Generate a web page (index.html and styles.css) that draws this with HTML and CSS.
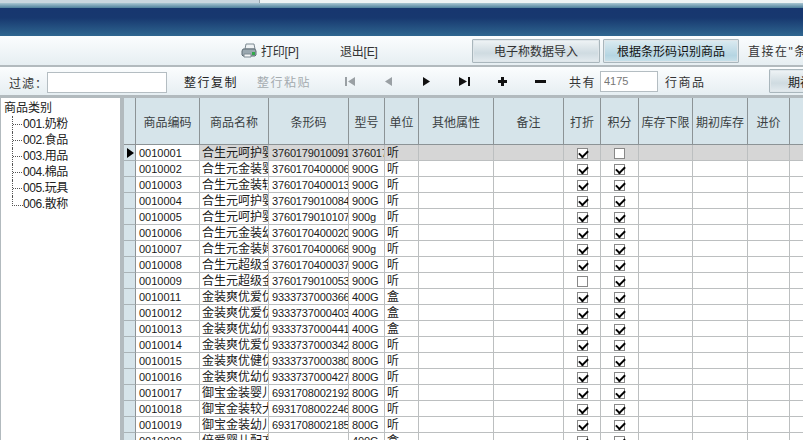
FILE: index.html
```html
<!DOCTYPE html>
<html lang="zh">
<head>
<meta charset="utf-8">
<title>商品</title>
<link rel="stylesheet" href="styles.css">
</head>
<body>
<div class="app">
  <div class="topstrip"><div class="tabs"><div class="tab-a"></div><div class="tab-b"></div></div><div class="fade"></div></div>
  <div class="banner"></div>
  <div class="toolbar">
    <svg class="printer" width="16" height="15" viewBox="0 0 16 15"><path d="M5 1h8l1 5H4z" fill="#eef2f4" stroke="#7d8a92"/><path d="M2 6h12l1 2v4l-1 1H2l-1-1V8z" fill="#9aa8b0" stroke="#5f6d75"/><path d="M3 11h7v3H3z" fill="#f4f6f7" stroke="#7d8a92"/><rect x="11" y="9" width="3" height="3" fill="#2fa84a"/></svg>
    <span class="print-label">打印[P]</span>
    <span class="exit-label">退出[E]</span>
    <button class="btn btn-import">电子称数据导入</button>
    <button class="btn btn-active">根据条形码识别商品</button>
    <span class="hint">直接在"条形码"列输入</span>
  </div>
  <div class="sep"></div>
  <div class="filterbar">
    <span class="filter-label">过滤：</span>
    <input class="filter-input" type="text">
    <span class="act act-copy">整行复制</span>
    <span class="act act-paste">整行粘贴</span>
    <div class="nav">
      <svg class="nav-i" width="11" height="9" viewBox="0 0 11 9"><path d="M0 0h2v9H0zM10 0v9L3 4.500z" fill="#9aa0a4"/></svg>
      <svg class="nav-i" width="11" height="9" viewBox="0 0 11 9"><path d="M9 0v9L2 4.500z" fill="#9aa0a4"/></svg>
      <svg class="nav-i" width="11" height="9" viewBox="0 0 11 9"><path d="M2 0v9l7-4.500z" fill="#111"/></svg>
      <svg class="nav-i" width="11" height="9" viewBox="0 0 11 9"><path d="M0 0v9l8-4.500zM9 0h2v9H9z" fill="#111"/></svg>
      <svg class="nav-i" width="11" height="11" viewBox="0 0 11 11"><path d="M4 1h3v3h3v3H7v3H4V7H1V4h3z" fill="#111"/></svg>
      <svg class="nav-i" width="11" height="11" viewBox="0 0 11 11"><path d="M0 4h11v3H0z" fill="#111"/></svg>
    </div>
    <span class="total">共有</span>
    <input class="count-input" type="text" value="4175">
    <span class="total-after">行商品</span>
    <button class="btn btn-period">期初库存导入</button>
  </div>
  <div class="sep2"></div>
  <div class="main">
    <div class="tree">
      <div class="tree-root">商品类别</div>
      <ul class="tree-list">
        <li>001.奶粉</li>
        <li>002.食品</li>
        <li>003.用品</li>
        <li>004.棉品</li>
        <li>005.玩具</li>
        <li>006.散称</li>
      </ul>
    </div>
    <div class="gridpane">
      <table class="grid">
        <colgroup>
          <col class="c0"><col class="c1"><col class="c2"><col class="c3"><col class="c4"><col class="c5"><col class="c6"><col class="c7"><col class="c8"><col class="c9"><col class="c10"><col class="c11"><col class="c12"><col class="c13">
        </colgroup>
        <thead>
          <tr><th></th><th>商品编码</th><th>商品名称</th><th>条形码</th><th>型号</th><th>单位</th><th>其他属性</th><th>备注</th><th>打折</th><th>积分</th><th>库存下限</th><th>期初库存</th><th>进价</th><th>零售价</th></tr>
        </thead>
        <tbody>
          <tr class="sel"><td class="rh"><span class="arrow"></span></td><td class="code">0010001</td><td>合生元呵护婴儿</td><td class="num">3760179010091</td><td class="num">376017</td><td>听</td><td></td><td></td><td class="cc"><i class="ck on"></i></td><td class="cc"><i class="ck"></i></td><td></td><td></td><td></td><td></td></tr>
          <tr><td class="rh"></td><td class="code">0010002</td><td>合生元金装婴儿</td><td class="num">3760170400006</td><td class="num">900G</td><td>听</td><td></td><td></td><td class="cc"><i class="ck on"></i></td><td class="cc"><i class="ck on"></i></td><td></td><td></td><td></td><td></td></tr>
          <tr><td class="rh"></td><td class="code">0010003</td><td>合生元金装较大</td><td class="num">3760170400013</td><td class="num">900G</td><td>听</td><td></td><td></td><td class="cc"><i class="ck on"></i></td><td class="cc"><i class="ck on"></i></td><td></td><td></td><td></td><td></td></tr>
          <tr><td class="rh"></td><td class="code">0010004</td><td>合生元呵护婴儿</td><td class="num">3760179010084</td><td class="num">900G</td><td>听</td><td></td><td></td><td class="cc"><i class="ck on"></i></td><td class="cc"><i class="ck on"></i></td><td></td><td></td><td></td><td></td></tr>
          <tr><td class="rh"></td><td class="code">0010005</td><td>合生元呵护婴儿</td><td class="num">3760179010107</td><td class="num">900g</td><td>听</td><td></td><td></td><td class="cc"><i class="ck on"></i></td><td class="cc"><i class="ck on"></i></td><td></td><td></td><td></td><td></td></tr>
          <tr><td class="rh"></td><td class="code">0010006</td><td>合生元金装幼儿</td><td class="num">3760170400020</td><td class="num">900G</td><td>听</td><td></td><td></td><td class="cc"><i class="ck on"></i></td><td class="cc"><i class="ck on"></i></td><td></td><td></td><td></td><td></td></tr>
          <tr><td class="rh"></td><td class="code">0010007</td><td>合生元金装妈妈</td><td class="num">3760170400068</td><td class="num">900g</td><td>听</td><td></td><td></td><td class="cc"><i class="ck on"></i></td><td class="cc"><i class="ck on"></i></td><td></td><td></td><td></td><td></td></tr>
          <tr><td class="rh"></td><td class="code">0010008</td><td>合生元超级金装</td><td class="num">3760170400037</td><td class="num">900G</td><td>听</td><td></td><td></td><td class="cc"><i class="ck on"></i></td><td class="cc"><i class="ck on"></i></td><td></td><td></td><td></td><td></td></tr>
          <tr><td class="rh"></td><td class="code">0010009</td><td>合生元超级金装</td><td class="num">3760179010053</td><td class="num">900G</td><td>听</td><td></td><td></td><td class="cc"><i class="ck"></i></td><td class="cc"><i class="ck on"></i></td><td></td><td></td><td></td><td></td></tr>
          <tr><td class="rh"></td><td class="code">0010011</td><td>金装爽优爱优</td><td class="num">9333737000366</td><td class="num">400G</td><td>盒</td><td></td><td></td><td class="cc"><i class="ck on"></i></td><td class="cc"><i class="ck on"></i></td><td></td><td></td><td></td><td></td></tr>
          <tr><td class="rh"></td><td class="code">0010012</td><td>金装爽优爱优</td><td class="num">9333737000403</td><td class="num">400G</td><td>盒</td><td></td><td></td><td class="cc"><i class="ck on"></i></td><td class="cc"><i class="ck on"></i></td><td></td><td></td><td></td><td></td></tr>
          <tr><td class="rh"></td><td class="code">0010013</td><td>金装爽优幼优</td><td class="num">9333737000441</td><td class="num">400G</td><td>盒</td><td></td><td></td><td class="cc"><i class="ck on"></i></td><td class="cc"><i class="ck on"></i></td><td></td><td></td><td></td><td></td></tr>
          <tr><td class="rh"></td><td class="code">0010014</td><td>金装爽优爱优</td><td class="num">9333737000342</td><td class="num">800G</td><td>听</td><td></td><td></td><td class="cc"><i class="ck on"></i></td><td class="cc"><i class="ck on"></i></td><td></td><td></td><td></td><td></td></tr>
          <tr><td class="rh"></td><td class="code">0010015</td><td>金装爽优健优</td><td class="num">9333737000380</td><td class="num">800G</td><td>听</td><td></td><td></td><td class="cc"><i class="ck on"></i></td><td class="cc"><i class="ck on"></i></td><td></td><td></td><td></td><td></td></tr>
          <tr><td class="rh"></td><td class="code">0010016</td><td>金装爽优幼优</td><td class="num">9333737000427</td><td class="num">800G</td><td>听</td><td></td><td></td><td class="cc"><i class="ck on"></i></td><td class="cc"><i class="ck on"></i></td><td></td><td></td><td></td><td></td></tr>
          <tr><td class="rh"></td><td class="code">0010017</td><td>御宝金装婴儿</td><td class="num">6931708002192</td><td class="num">800G</td><td>听</td><td></td><td></td><td class="cc"><i class="ck on"></i></td><td class="cc"><i class="ck on"></i></td><td></td><td></td><td></td><td></td></tr>
          <tr><td class="rh"></td><td class="code">0010018</td><td>御宝金装较大</td><td class="num">6931708002246</td><td class="num">800G</td><td>听</td><td></td><td></td><td class="cc"><i class="ck on"></i></td><td class="cc"><i class="ck on"></i></td><td></td><td></td><td></td><td></td></tr>
          <tr><td class="rh"></td><td class="code">0010019</td><td>御宝金装幼儿</td><td class="num">6931708002185</td><td class="num">800G</td><td>听</td><td></td><td></td><td class="cc"><i class="ck on"></i></td><td class="cc"><i class="ck on"></i></td><td></td><td></td><td></td><td></td></tr>
          <tr><td class="rh"></td><td class="code">0010020</td><td>倍爱婴儿配方</td><td class="num"></td><td class="num">400G</td><td>盒</td><td></td><td></td><td class="cc"><i class="ck on"></i></td><td class="cc"><i class="ck on"></i></td><td></td><td></td><td></td><td></td></tr>
        </tbody>
      </table>
    </div>
  </div>
</div>
</body>
</html>
```

FILE: styles.css
```css
* { box-sizing: border-box; }
html, body { margin: 0; height: 100%; overflow: hidden; background: #fff; }
body { font-family: "Liberation Sans", "Noto Sans CJK SC", sans-serif; font-size: 12px; color: #222; }
.app { width: 803px; height: 440px; display: flex; flex-direction: column; overflow: hidden; }

.topstrip { height: 8px; flex: none; display: flex; flex-direction: column; }
.tabs { height: 3px; display: flex; }
.tab-a { width: 260px; background: #c9d6df; border-right: 1px solid #9aa5ab; }
.tab-b { flex: 1; background: #eef2f4; }
.fade { height: 5px; background: linear-gradient(#a9c6d2, #4d7f9c); }
.banner { height: 28px; flex: none; background: linear-gradient(#17366f 0%, #17386f 35%, #2f6690 100%); }

.toolbar { height: 29px; flex: none; display: flex; align-items: center; background: linear-gradient(#fbfdfe, #e6eef2); overflow: hidden; white-space: nowrap; color: #333; }
.printer { margin-left: 241px; flex: none; }
.print-label { margin-left: 4px; width: 79px; flex: none; letter-spacing: -0.2px; }
.exit-label { width: 132px; flex: none; letter-spacing: -0.2px; }
.btn { font: inherit; color: #222; height: 24px; flex: none; padding: 0; border: 1px solid #a9b6bc; outline: 1px solid #dfe6ea; outline-offset: -2px; border-radius: 1px; background: linear-gradient(#f0f4f6, #cfdbe1 60%, #e4ebef); white-space: nowrap; overflow: hidden; }
.btn-import { width: 128px; color: #333; }
.btn-active { width: 136px; margin-left: 3px; background: linear-gradient(#dcebf1, #b5d5e2 70%, #c9e1ea); color: #111; }
.hint { margin-left: 9px; letter-spacing: 1.5px; flex: none; }

.sep { height: 2px; flex: none; background: #b2babe; }
.filterbar { height: 28px; flex: none; display: flex; align-items: center; background: linear-gradient(#fbfdfe, #e6eef2); white-space: nowrap; overflow: hidden; color: #333; }
.filter-label { margin-left: 9px; width: 38px; flex: none; letter-spacing: 1px; padding-top: 3px; }
.filter-input { width: 120px; height: 21px; flex: none; border: 1px solid #b4bdc2; background: #fff; padding: 0; margin-top: 2px; }
.act { flex: none; letter-spacing: 1.5px; width: 73px; }
.act-copy { margin-left: 17px; color: #222; }
.act-paste { color: #a4abaf; }
.nav { display: flex; align-items: center; margin-left: 15px; gap: 27px; flex: none; width: 224px; }
.nav-i { flex: none; }
.total { letter-spacing: 1.5px; width: 31px; flex: none; }
.count-input { width: 58px; height: 21px; flex: none; border: 1px solid #b4bdc2; background: #fff; padding: 0 3px; font: 11px "Liberation Sans", sans-serif; color: #777; }
.total-after { margin-left: 7px; letter-spacing: 1.5px; width: 104px; flex: none; }
.btn-period { width: 110px; }

.sep2 { height: 3px; flex: none; background: #b2babe; }
.main { flex: 1; display: flex; min-height: 0; background: #b2babe; }
.tree { width: 119px; flex: none; background: #fff; margin-left: 1px; color: #222; padding-top: 2px; }
.tree-root { height: 16px; line-height: 16px; padding-left: 3px; }
.tree-list { list-style: none; margin: 0 0 0 11px; padding: 0; width: 100px; position: relative; }
.tree-list li { height: 16px; line-height: 16px; padding-left: 10px; letter-spacing: -0.4px; position: relative; border-left: 1px dotted #555; }
.tree-list li:last-child { border-left-color: transparent; }
.tree-list li::before { content: ""; position: absolute; left: 0; top: 8px; width: 9px; border-top: 1px dotted #555; }
.tree-list li:last-child::before { left: -1px; width: 10px; top: 0; height: 9px; border-top: none; border-left: 1px dotted #555; border-bottom: 1px dotted #555; }

.gridpane { flex: 1; min-width: 0; margin-left: 4px; overflow: hidden; background: #fff; }
.grid { table-layout: fixed; border-collapse: separate; border-spacing: 0; width: 679px; }
.c0 { width: 12px; } .c1 { width: 64px; } .c2 { width: 69px; } .c3 { width: 80px; } .c4 { width: 36px; }
.c5 { width: 34px; } .c6 { width: 75px; } .c7 { width: 70px; } .c8 { width: 37px; } .c9 { width: 38px; }
.c10 { width: 54px; } .c11 { width: 55px; } .c12 { width: 42px; } .c13 { width: 66px; }
.grid th { height: 47px; padding: 0; font-weight: 400; color: #3a3f42; background: #d6e4ea; border-right: 1px solid #8c9396; border-bottom: 1px solid #8c9396; white-space: nowrap; overflow: hidden; }
.grid td { height: 16px; padding: 1px 0 0 2px; line-height: 14px; border-right: 1px solid #bcbfc0; border-bottom: 1px solid #bcbfc0; white-space: nowrap; overflow: hidden; color: #1a1a1a; }
.grid td.code { padding-left: 3px; font-size: 11px; }
.grid td.num { padding-left: 3px; font-size: 11px; letter-spacing: -0.15px; }
.grid td.rh { background: #d6e4ea; padding: 0; border-right-color: #8c9396; border-bottom-color: #a9b3b7; position: relative; }
.grid td.cc { padding: 0; text-align: center; }
.sel td { background: #d6d6d6; }
.sel td.code { background: #fff; }
.arrow { display: block; width: 0; height: 0; margin: 1px 0 0 3px; border-left: 7px solid #000; border-top: 5.500px solid transparent; border-bottom: 5.500px solid transparent; }
.ck { display: inline-block; width: 11px; height: 11px; margin-top: 2px; vertical-align: top; border: 1px solid #888; background: #fff; position: relative; }
.ck.on::after { content: ""; position: absolute; left: 1px; top: 1px; width: 7px; height: 4px; border-left: 2px solid #000; border-bottom: 2px solid #000; transform: rotate(-45deg); }
```
